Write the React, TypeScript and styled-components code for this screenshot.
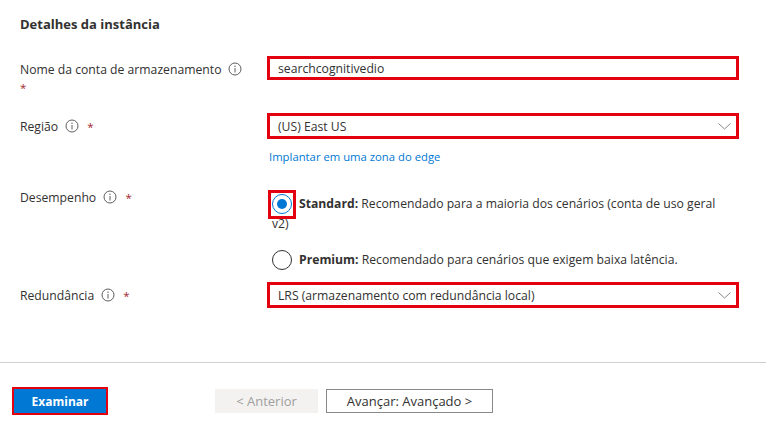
import React from 'react';
import styled, { createGlobalStyle } from 'styled-components';

const Global = createGlobalStyle`
  html, body { margin: 0; padding: 0; background: #fff; }
  body { font-family: "Open Sans", "Noto Sans", sans-serif; color: #323130; font-size: 12.2px; }
  *, *::before, *::after { box-sizing: border-box; }
`;

const HIGHLIGHT = '#e3000f';

const Page = styled.div`
  width: 766px;
  height: 431px;
  background: #fff;
  overflow: hidden;
`;

const Section = styled.section`
  padding: 15px 27px 0 20px;
`;

const Title = styled.h2`
  margin: 0;
  font-size: 13px;
  font-weight: 700;
  line-height: 18px;
  color: #323130;
`;

const Row = styled.div<{ $mt: number }>`
  display: grid;
  grid-template-columns: 247px 1fr;
  align-items: start;
  margin-top: ${(p) => p.$mt}px;
`;

const Label = styled.div`
  padding-top: 5px;
  line-height: 18px;
  max-width: 234px;
  color: #323130;
`;

const InfoIcon = styled.span`
  display: inline-block;
  vertical-align: -2px;
  margin: 0 5px 0 7px;
  width: 14px;
  height: 14px;
`;

const Required = styled.span`
  color: #a4262c;
  font-size: 11.5px;
`;

const Control = styled.div``;

const TextInput = styled.input`
  display: block;
  width: 100%;
  height: 24px;
  border: 3px solid ${HIGHLIGHT};
  padding: 0 8px;
  font: inherit;
  font-size: 12.2px;
  color: #323130;
  background: #fff;
  outline: none;
`;

const Select = styled.div`
  display: flex;
  align-items: center;
  justify-content: space-between;
  height: 26px;
  border: 3px solid ${HIGHLIGHT};
  padding: 0 5px 0 8px;
  color: #323130;
  background: #fff;
`;

const Link = styled.a`
  display: block;
  margin-top: 9px;
  line-height: 18px;
  font-size: 11.3px;
  color: #0078d4;
  text-decoration: none;
  padding-left: 2px;
`;

const RadioGroup = styled.div`
  margin-top: 10px;
  padding: 0 14px 0 5px;
`;

const RadioOption = styled.div<{ $mt?: number }>`
  line-height: 20px;
  margin-top: ${(p) => p.$mt ?? 0}px;
  color: #323130;
`;

const RadioCircle = styled.span<{ $checked?: boolean; $highlight?: boolean }>`
  position: relative;
  display: inline-block;
  vertical-align: top;
  width: 20px;
  height: 20px;
  margin-right: 7px;
  border-radius: 50%;
  border: 1.5px solid ${(p) => (p.$checked ? '#0078d4' : '#323130')};
  &::before {
    content: '';
    display: ${(p) => (p.$checked ? 'block' : 'none')};
    position: absolute;
    left: 3.5px;
    top: 3.5px;
    width: 10px;
    height: 10px;
    border-radius: 50%;
    background: #0078d4;
  }
  &::after {
    content: '';
    display: ${(p) => (p.$highlight ? 'block' : 'none')};
    position: absolute;
    left: -5.5px;
    top: -5.5px;
    width: 28px;
    height: 29px;
    border: 3px solid ${HIGHLIGHT};
  }
`;

const Strong = styled.b`
  font-weight: 700;
`;

const Divider = styled.hr`
  margin: 54px 0 0 0;
  border: none;
  border-top: 1px solid #d2d0ce;
  height: 0;
`;

const Footer = styled.div`
  display: flex;
  align-items: center;
  padding: 26px 0 0 14px;
`;

const Button = styled.button<{ $variant: 'primary' | 'disabled' | 'default'; $width: number; $ml?: number }>`
  width: ${(p) => p.$width}px;
  height: 24px;
  margin-left: ${(p) => p.$ml ?? 0}px;
  font-family: inherit;
  font-size: ${(p) => (p.$variant === 'primary' ? '12px' : '13px')};
  padding: 0;
  cursor: pointer;
  font-weight: ${(p) => (p.$variant === 'primary' ? 700 : 400)};
  background: ${(p) => (p.$variant === 'primary' ? '#0078d4' : p.$variant === 'disabled' ? '#f3f2f1' : '#fff')};
  color: ${(p) => (p.$variant === 'primary' ? '#fff' : p.$variant === 'disabled' ? '#a19f9d' : '#323130')};
  border: ${(p) =>
    p.$variant === 'primary' ? 'none' : p.$variant === 'disabled' ? '1px solid #f3f2f1' : '1px solid #8a8886'};
  outline: ${(p) => (p.$variant === 'primary' ? `2px solid ${HIGHLIGHT}` : 'none')};
`;

const Info = () => (
  <InfoIcon>
    <svg width="14" height="14" viewBox="0 0 14 14" fill="none">
      <circle cx="7" cy="7" r="6" stroke="#605e5c" strokeWidth="1" />
      <line x1="7" y1="6" x2="7" y2="10.5" stroke="#605e5c" strokeWidth="1" />
      <circle cx="7" cy="4.2" r="0.7" fill="#605e5c" />
    </svg>
  </InfoIcon>
);

const Chevron = () => (
  <svg width="13" height="7" viewBox="0 0 13 7" fill="none">
    <path d="M0.5 0.5 L6.5 6 L12.5 0.5" stroke="#8a8886" strokeWidth="1" />
  </svg>
);

export default function App() {
  return (
    <Page>
      <Global />
      <Section>
        <Title>Detalhes da instância</Title>

        <Row $mt={23}>
          <Label>
            Nome da conta de armazenamento<Info /> <Required>*</Required>
          </Label>
          <Control>
            <TextInput defaultValue="searchcognitivedio" />
          </Control>
        </Row>

        <Row $mt={16}>
          <Label>
            Região<Info /> <Required>*</Required>
          </Label>
          <Control>
            <Select>
              <span>(US) East US</span>
              <Chevron />
            </Select>
            <Link href="#">Implantar em uma zona do edge</Link>
          </Control>
        </Row>

        <Row $mt={18}>
          <Label>
            Desempenho<Info /> <Required>*</Required>
          </Label>
          <RadioGroup>
            <RadioOption>
              <RadioCircle $checked $highlight />
              <Strong>Standard:</Strong> Recomendado para a maioria dos cenários (conta de uso geral v2)
            </RadioOption>
            <RadioOption $mt={16}>
              <RadioCircle />
              <Strong>Premium:</Strong> Recomendado para cenários que exigem baixa latência.
            </RadioOption>
          </RadioGroup>
        </Row>

        <Row $mt={12}>
          <Label>
            Redundância<Info /> <Required>*</Required>
          </Label>
          <Control>
            <Select>
              <span>LRS (armazenamento com redundância local)</span>
              <Chevron />
            </Select>
          </Control>
        </Row>
      </Section>

      <Divider />

      <Footer>
        <Button $variant="primary" $width={92}>Examinar</Button>
        <Button $variant="disabled" $width={103} $ml={109}>&lt; Anterior</Button>
        <Button $variant="default" $width={167} $ml={8}>Avançar: Avançado &gt;</Button>
      </Footer>
    </Page>
  );
}
